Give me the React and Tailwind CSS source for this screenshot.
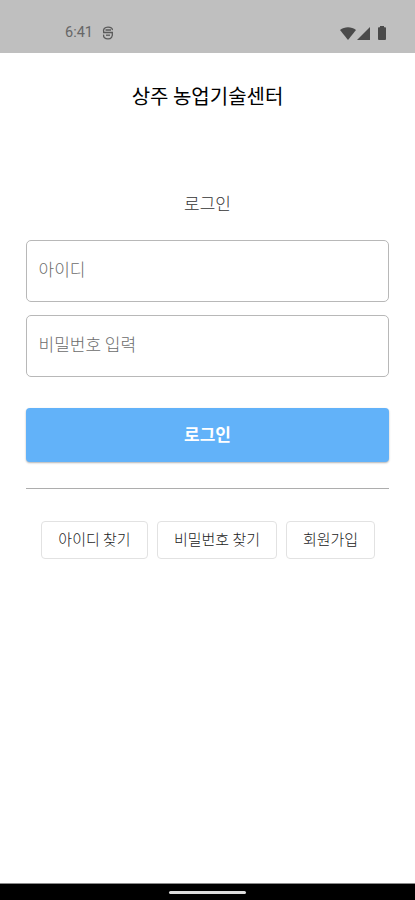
import { useState } from "react";

const links = [
  { label: "아이디 찾기", width: "w-[107px]" },
  { label: "비밀번호 찾기", width: "w-[120px]" },
  { label: "회원가입", width: "w-[89px]" },
];

function StatusBar() {
  return (
    <div className="h-[53px] shrink-0 bg-[#bfbfbf] flex items-start justify-between pt-[25px] pl-[65px] pr-[29px] text-[#4a4a4a]">
      <div className="flex items-center h-4">
        <span className="w-[37px] font-['Roboto',sans-serif] text-[14.5px] leading-4 text-[#666]">
          6:41
        </span>
        <svg width="12" height="14" viewBox="0 0 12 14" fill="none" stroke="#5a5a5a" strokeWidth="1.3">
          <path d="M1.800 6.500C.6 3 2.800 1.200 6 1.200s4.600 1.300 4.400 3" />
          <path d="M3.500 4h5.500M1 6.500h10" />
          <path d="M10.200 6.500C11.200 10.800 9 12.900 6 12.900S1.200 11.500 1.600 8.700" />
          <path d="M4 9.200h4" />
        </svg>
      </div>
      <div className="flex items-center h-4">
        <svg width="16" height="13" viewBox="0 0 16 13" fill="currentColor">
          <path d="M0 3C4.500-.6 11.500-.6 16 3L8 13z" />
        </svg>
        <svg className="ml-[1px]" width="13" height="13" viewBox="0 0 13 13" fill="currentColor">
          <path d="M13 0v13H0z" />
        </svg>
        <svg className="ml-[8px]" width="8" height="14" viewBox="0 0 8 14" fill="currentColor">
          <path d="M2 0h4v1.300h1.200q.8 0 .8.800V13q0 1-1 1H1q-1 0-1-1V2.100q0-.8.800-.8H2z" />
        </svg>
      </div>
    </div>
  );
}

export default function App() {
  const [id, setId] = useState("");
  const [password, setPassword] = useState("");

  const inputClass =
    "block w-full h-[62px] rounded-[5px] border border-[#b8b8b8] bg-white pl-[11.5px] pr-[11px] pb-[5px] text-[17px] font-light text-[#555] placeholder:text-[#6c6c6c] outline-none";

  return (
    <div className="h-screen flex flex-col bg-white font-['Noto_Sans_CJK_KR',sans-serif]">
      <StatusBar />

      <header className="h-[85px] shrink-0 flex items-center justify-center">
        <h1 className="text-[20px] leading-none text-black">상주 농업기술센터</h1>
      </header>

      <main className="flex-1 px-[26px] pt-[52px]">
        <h2 className="h-[26px] leading-[26px] text-center text-[17px] font-light text-[#333]">
          로그인
        </h2>

        <form className="mt-[24px]" onSubmit={(e) => e.preventDefault()}>
          <input
            className={inputClass}
            placeholder="아이디"
            value={id}
            onChange={(e) => setId(e.target.value)}
          />
          <input
            className={`${inputClass} mt-[13px]`}
            type="password"
            placeholder="비밀번호 입력"
            value={password}
            onChange={(e) => setPassword(e.target.value)}
          />
          <button
            type="submit"
            className="mt-[31px] w-full h-[54px] rounded-[4px] bg-[#62b2f9] pb-[2px] text-[17px] font-bold text-white shadow-[0_1px_2px_rgba(0,0,0,0.3)]"
          >
            로그인
          </button>
        </form>

        <hr className="mt-[26px] border-[#adadad]" />

        <div className="mt-8 pl-px flex justify-center gap-[9px]">
          {links.map((link) => (
            <button
              key={link.label}
              className={`${link.width} h-[38px] rounded-[4px] border border-[#e2e2e2] pb-[1px] text-[15px] font-light text-[#222] whitespace-nowrap`}
            >
              {link.label}
            </button>
          ))}
        </div>
      </main>

      <footer className="h-[17px] shrink-0 border-t border-[#8a8a8a] bg-black flex justify-center pt-[7px]">
        <div className="w-[77px] h-[3px] rounded-full bg-[#ddd]" />
      </footer>
    </div>
  );
}
